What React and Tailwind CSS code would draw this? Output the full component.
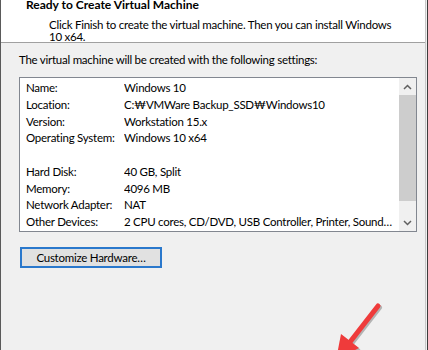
export default function App() {
  const rows = [
    ['Name:', 'Windows 10'],
    ['Location:', 'C:₩VMWare Backup_SSD₩Windows10'],
    ['Version:', 'Workstation 15.x'],
    ['Operating System:', 'Windows 10 x64'],
    ['', ''],
    ['Hard Disk:', '40 GB, Split'],
    ['Memory:', '4096 MB'],
    ['Network Adapter:', 'NAT'],
    ['Other Devices:', '2 CPU cores, CD/DVD, USB Controller, Printer, Sound…'],
  ];

  return (
    <div className="relative flex h-[350px] w-[428px] overflow-hidden bg-[#f0f0f0] font-['Lato',sans-serif] text-[11.5px] tracking-[-0.25px] text-black">
      <div className="flex w-[425px] flex-col border-l border-[#5a5a5a]">
        {/* Header */}
        <div className="h-[43px] border-b border-[#a0a0a0] bg-white">
          <div className="ml-[25px] -mt-[1px] whitespace-nowrap text-[12px] font-bold leading-[12px] tracking-normal">Ready to Create Virtual Machine</div>
          <div className="ml-[48px] mt-[8px] w-[350px] leading-[12px]">
            Click Finish to create the virtual machine. Then you can install Windows 10 x64.
          </div>
        </div>

        {/* Body */}
        <div className="px-[18px]">
          <div className="mt-[9px] whitespace-nowrap leading-[16px]">The virtual machine will be created with the following settings:</div>

          <div className="mt-[9px] flex h-[155px] w-[398px] border border-[#828790] bg-white">
            <div className="flex-1 pl-[6px] pt-[2px]">
              {rows.map(([label, value], i) => (
                <div key={i} className="flex h-[16.75px] items-center whitespace-nowrap leading-[16.75px]">
                  <div className="w-[98px] shrink-0">{label}</div>
                  <div className="w-[272px] truncate">{value}</div>
                </div>
              ))}
            </div>
            <div className="flex w-[17px] flex-col bg-[#f0f0f0]">
              <div className="flex h-[17px] items-center justify-center">
                <svg width="9" height="6" viewBox="0 0 9 6">
                  <polyline points="1,5 4.5,1.5 8,5" fill="none" stroke="#606060" strokeWidth="1.5" />
                </svg>
              </div>
              <div className="h-[106px] bg-[#cdcdcd]" />
              <div className="flex-1" />
              <div className="flex h-[17px] items-center justify-center">
                <svg width="9" height="6" viewBox="0 0 9 6">
                  <polyline points="1,1 4.5,4.5 8,1" fill="none" stroke="#606060" strokeWidth="1.5" />
                </svg>
              </div>
            </div>
          </div>

          <button className="ml-[1px] mt-[15px] flex h-[21px] w-[142px] items-center justify-center border-2 border-[#2a78cc] bg-[#e1e1e1] leading-[14px]">
            Customize Hardware…
          </button>
        </div>
      </div>
      <div className="w-[1px] bg-[#c8c8c8]" />
      <div className="w-[1px] bg-[#f0f0f0]" />
      <div className="w-[1px] bg-[#3c3c3c]" />

      {/* Red annotation arrow */}
      <svg className="absolute left-0 top-0" width="428" height="350" viewBox="0 0 428 350">
        <g opacity="0.25" transform="translate(1.5,1.5)">
          <line x1="378" y1="306" x2="350" y2="342" stroke="#000" strokeWidth="5" strokeLinecap="round" />
          <polygon points="359,348 341,334 336,360" fill="#000" />
        </g>
        <line x1="378" y1="306" x2="350" y2="342" stroke="#ef3b3b" strokeWidth="5" strokeLinecap="round" />
        <polygon points="359,348 341,334 336,360" fill="#ef3b3b" />
      </svg>
    </div>
  );
}
